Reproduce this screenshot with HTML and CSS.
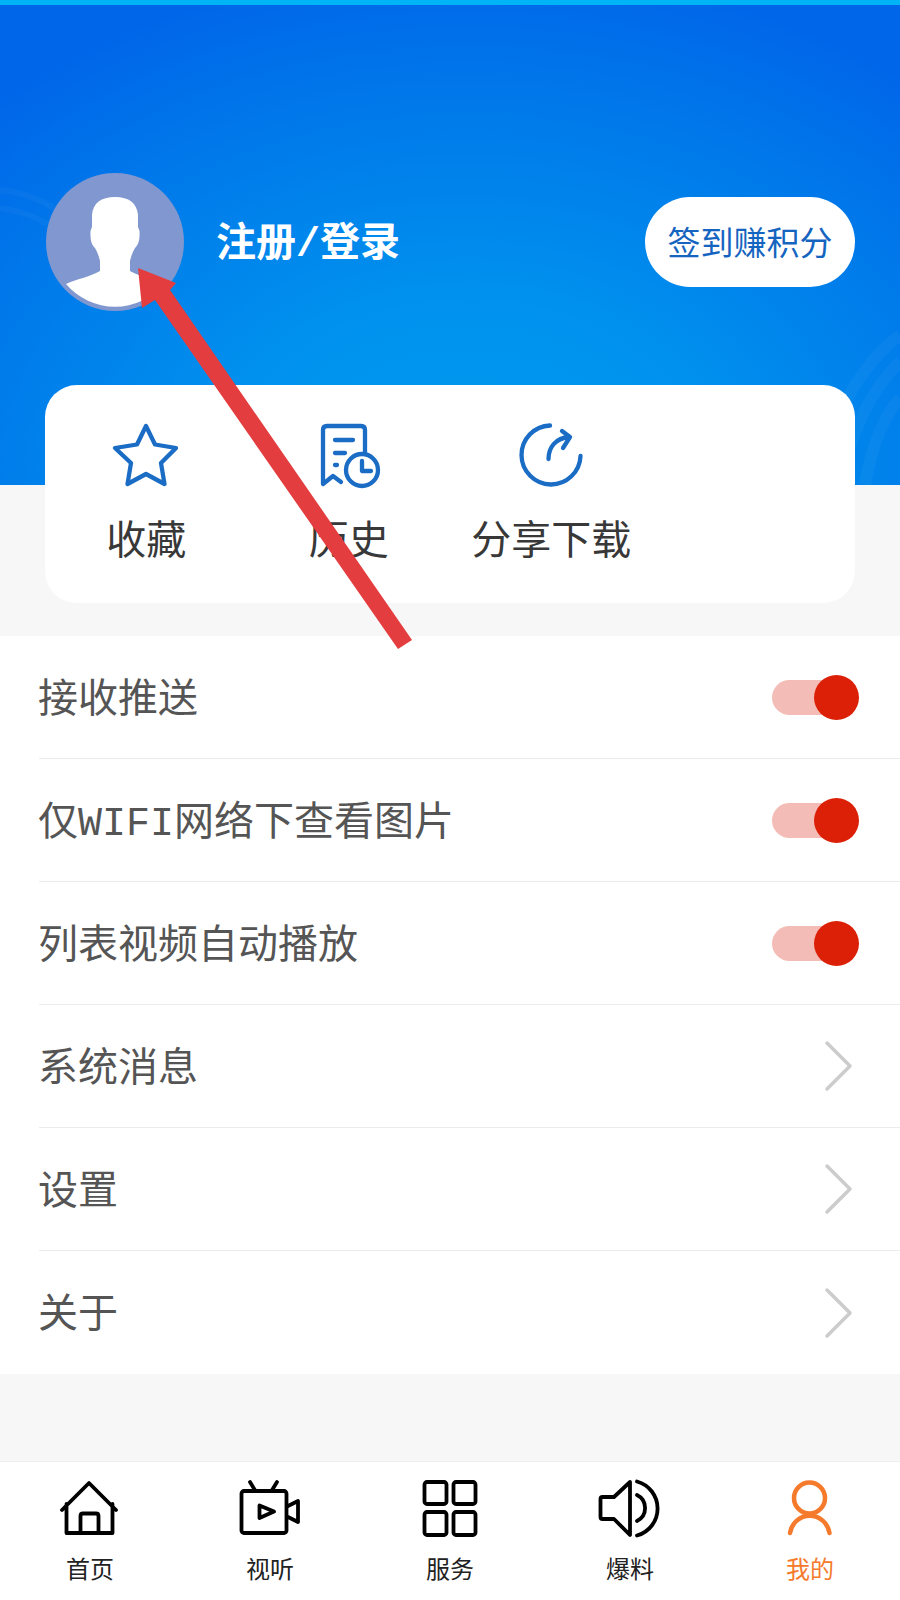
FILE: index.html
```html
<!DOCTYPE html>
<html lang="zh-CN">
<head>
<meta charset="utf-8">
<title>我的</title>
<link rel="stylesheet" href="styles.css">
</head>
<body>
<div class="page">
  <header class="hero">
    <div class="strip"></div>
    <svg class="waves" viewBox="0 0 900 485" aria-hidden="true">
      <g fill="none" stroke="#ffffff" stroke-opacity=".035" stroke-width="12">
        <path d="M815 485C830 420 860 365 900 335"/>
        <path d="M840 485C850 430 875 385 900 362"/>
        <path d="M865 485C872 445 885 415 900 398"/>
      </g>
      <g fill="none" stroke="#ffffff" stroke-opacity=".03" stroke-width="6">
        <path d="M0 190C20 192 40 198 60 212"/>
        <path d="M0 208C15 210 30 214 48 224"/>
      </g>
    </svg>
    <div class="profile">
      <svg class="avatar" viewBox="0 0 138 138">
        <circle cx="69" cy="69" r="69" fill="#8097cf"/>
        <path fill="#fff" d="M69 24C55 24 47 30 46 42L46 54L44.500 58C44 68 46 72 49 75C52 80 53 84 54 88L54 98C44 104 30 106 20 111A64 64 0 0 0 118 111C108 106 94 104 84 98L84 88C85 84 86 80 89 75C92 72 94 68 93.500 58L92 54L92 42C91 30 83 24 69 24Z"/>
      </svg>
      <div class="login">注册/登录</div>
      <div class="signin">签到赚积分</div>
    </div>
  </header>

  <section class="quick">
    <div class="quick-item">
      <svg class="quick-icon" viewBox="111 420 70 70"><path d="M146 426L155 444.500L176 448L161 463L164.500 484L146 474L127.500 484L131 463L115 448L137 444.500Z"/></svg>
      <span class="quick-label">收藏</span>
    </div>
    <div class="quick-item">
      <svg class="quick-icon" viewBox="314 420 70 70"><path d="M323 484V430Q323 426 327 426H361Q365 426 365 430V453M323 484L333 476L341 482"/><path d="M335 440H353M335 453H345M335 465H337"/><circle cx="362" cy="470" r="16"/><path d="M362 461V471H371"/></svg>
      <span class="quick-label">历史</span>
    </div>
    <div class="quick-item">
      <svg class="quick-icon" viewBox="516 420 70 70"><path d="M550 425.500A29.500 29.500 0 1 0 580.500 456"/><path d="M548.500 459C548.500 447 556 438 569 437M562 431L570 437L563 448"/></svg>
      <span class="quick-label">分享下载</span>
    </div>
  </section>

  <section class="list">
    <div class="row"><span class="row-text">接收推送</span><span class="toggle"><span class="knob"></span></span></div>
    <div class="row"><span class="row-text">仅WIFI网络下查看图片</span><span class="toggle"><span class="knob"></span></span></div>
    <div class="row"><span class="row-text">列表视频自动播放</span><span class="toggle"><span class="knob"></span></span></div>
    <div class="row"><span class="row-text">系统消息</span><svg class="chevron" viewBox="0 0 30 52"><path d="M3 3L26 26L3 49"/></svg></div>
    <div class="row"><span class="row-text">设置</span><svg class="chevron" viewBox="0 0 30 52"><path d="M3 3L26 26L3 49"/></svg></div>
    <div class="row"><span class="row-text">关于</span><svg class="chevron" viewBox="0 0 30 52"><path d="M3 3L26 26L3 49"/></svg></div>
  </section>

  <nav class="tabs">
    <div class="tab">
      <svg class="tab-icon" viewBox="55 1478 70 60"><path d="M62 1510L89 1483L116 1510M66.500 1504V1533H112.500V1504M80.500 1533V1516Q80.500 1513.500 83 1513.500H96Q98.500 1513.500 98.500 1516V1533"/></svg>
      <span class="tab-label">首页</span>
    </div>
    <div class="tab">
      <svg class="tab-icon" viewBox="235 1478 70 60"><rect x="241.500" y="1491" width="45" height="42" rx="2.500"/><path d="M250 1482L255.500 1491M277 1482L271.500 1491M259.500 1505.500V1518L274 1511.500ZM288 1506L298 1501V1522L288 1517"/></svg>
      <span class="tab-label">视听</span>
    </div>
    <div class="tab">
      <svg class="tab-icon" viewBox="415 1478 70 60"><rect x="424.500" y="1482" width="22" height="22" rx="2.500"/><rect x="453.500" y="1482" width="22" height="22" rx="2.500"/><rect x="424.500" y="1512" width="22" height="23" rx="2.500"/><rect x="453.500" y="1512" width="22" height="23" rx="2.500"/></svg>
      <span class="tab-label">服务</span>
    </div>
    <div class="tab">
      <svg class="tab-icon" viewBox="595 1478 70 60"><path d="M630 1482L614 1497H602.500Q600.500 1497 600.500 1499V1517Q600.500 1519 602.500 1519H614L630 1535Z"/><path d="M637 1481.500A28 28 0 0 1 637 1535.500M637 1495A14.500 14.500 0 0 1 637 1521"/></svg>
      <span class="tab-label">爆料</span>
    </div>
    <div class="tab tab-active">
      <svg class="tab-icon" viewBox="775 1478 70 60"><circle cx="809.500" cy="1498" r="15.500"/><path d="M790 1533A20 20.500 0 0 1 829.500 1533"/></svg>
      <span class="tab-label">我的</span>
    </div>
  </nav>

  <svg class="arrow" viewBox="0 0 900 1600" aria-hidden="true">
    <polygon points="138,268 176,283 170,290 412,640 398,649 155,300 142,308"/>
  </svg>
</div>
</body>
</html>
```
FILE: styles.css
```css
* { box-sizing: border-box; }
html, body { margin: 0; padding: 0; }
body { background: #f7f7f7; font-family: "Noto Sans CJK SC", sans-serif; }
.page { position: relative; width: 900px; height: 1600px; overflow: hidden; display: flex; flex-direction: column; }

.hero {
  position: relative;
  height: 485px;
  flex: none;
  background:
    radial-gradient(ellipse 700px 520px at 52% 100%, #009cf0 0%, #0092ee 35%, #007aea 72%, #0066e9 100%);
}
.strip { height: 4.500px; background: #00b4f6; }
.waves { position: absolute; left: 0; top: 0; width: 900px; height: 485px; }
.profile { position: relative; display: flex; align-items: center; padding: 168.500px 45px 0 46px; }
.avatar { width: 138px; height: 138px; flex: none; }
.login { margin-left: 32px; padding-top: 7px; font-family: "Liberation Mono", "Noto Sans CJK SC", monospace; font-size: 40px; line-height: 60px; font-weight: 700; color: #fff; }
.signin {
  margin-left: auto;
  width: 210px;
  height: 90px;
  border-radius: 45px;
  background: #fff;
  color: #1565c0;
  font-size: 33px;
  line-height: 88px;
  text-align: center;
}

.quick {
  position: relative;
  flex: none;
  margin: -100px 45px 0;
  height: 218px;
  padding-top: 35px;
  border-radius: 32px;
  background: #fff;
  display: grid;
  grid-template-columns: repeat(4, 1fr);
}
.quick-item { display: flex; flex-direction: column; align-items: center; }
.quick-icon { width: 70px; height: 70px; fill: none; stroke: #1a6cc4; stroke-width: 4.300; stroke-linejoin: round; stroke-linecap: round; }
.quick-label { margin-top: 22px; font-size: 40px; line-height: 50px; color: #383838; white-space: nowrap; }

.list { flex: none; margin-top: 33px; background: #fff; }
.row {
  height: 123px;
  margin-left: 39px;
  padding-right: 41px;
  border-bottom: 1px solid #ececec;
  display: flex;
  align-items: center;
  justify-content: space-between;
}
.row:last-child { border-bottom: 0; }
.row-text { margin-left: -1px; padding-top: 9px; font-family: "Liberation Mono", "Noto Sans CJK SC", monospace; font-size: 40px; line-height: 50px; color: #555; }
.toggle { position: relative; width: 72px; height: 35px; margin-right: 15px; border-radius: 18px; background: #f4bcb6; }
.knob { position: absolute; right: -15px; top: -5px; width: 45px; height: 45px; border-radius: 50%; background: #dc2008; }
.chevron { width: 30px; height: 52px; margin-right: 5px; fill: none; stroke: #cccccc; stroke-width: 3.500; stroke-linecap: round; stroke-linejoin: round; }

.tabs {
  flex: none;
  margin-top: auto;
  height: 139px;
  padding-top: 16px;
  border-top: 1px solid #eeeeee;
  background: #fff;
  display: grid;
  grid-template-columns: repeat(5, 180px);
}
.tab { display: flex; flex-direction: column; align-items: center; color: #222; }
.tab-icon { width: 70px; height: 60px; fill: none; stroke: #000; stroke-width: 3.800; stroke-linecap: round; stroke-linejoin: round; }
.tab-label { margin-top: 15px; font-size: 24px; line-height: 30px; white-space: nowrap; }
.tab-active { color: #f57a2c; }
.tab-active .tab-icon { stroke: #f57a2c; stroke-width: 4.500; }

.arrow { position: absolute; left: 0; top: 0; width: 900px; height: 1600px; fill: #e43d3f; pointer-events: none; }
```
